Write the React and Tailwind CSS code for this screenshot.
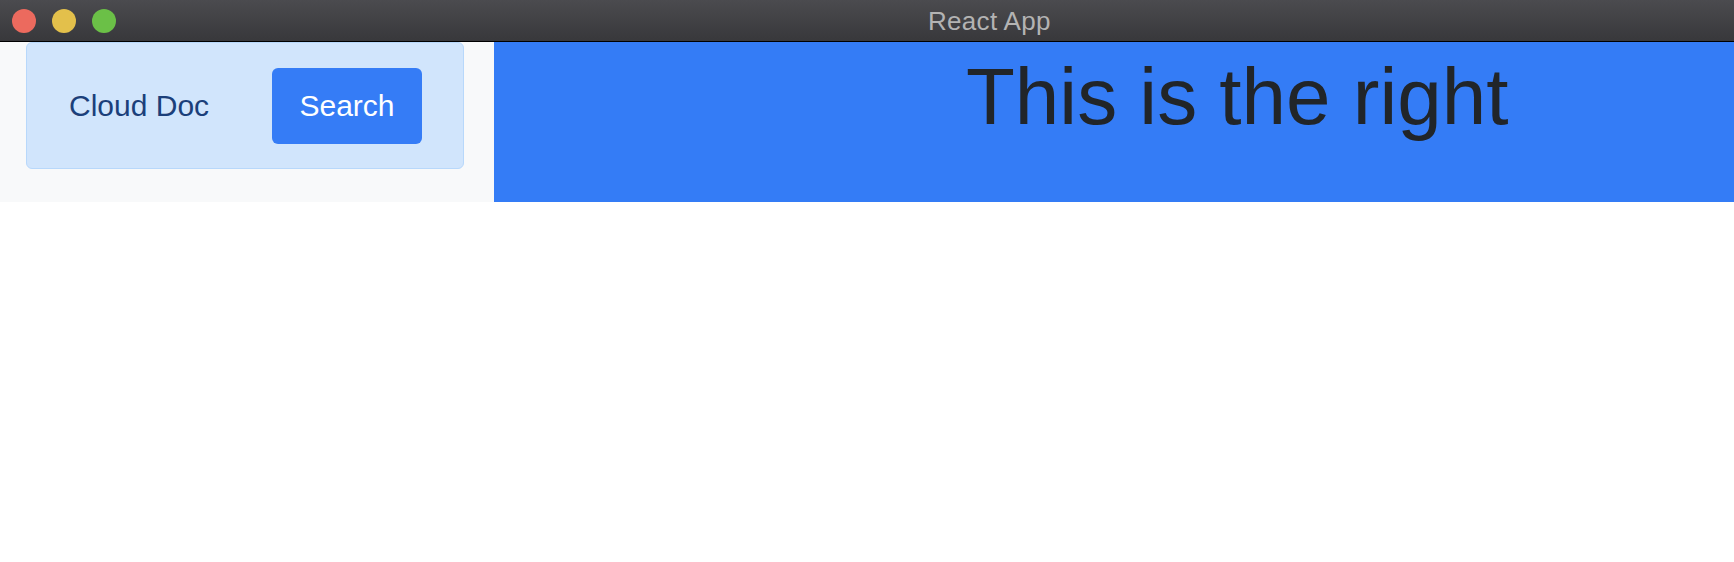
export default function App() {
  return (
    <div className="w-[1734px] h-[562px] bg-white overflow-hidden font-['Liberation_Sans',Arial,sans-serif]">
      {/* window title bar */}
      <div className="relative h-[42px] flex items-center bg-gradient-to-b from-[#4b4b4f] to-[#38383b] border-b border-black">
        <div className="flex items-center gap-4 pl-3">
          <span className="w-6 h-6 rounded-full bg-[#ec6a5e]" />
          <span className="w-6 h-6 rounded-full bg-[#e3c04b]" />
          <span className="w-6 h-6 rounded-full bg-[#6bc047]" />
        </div>
        <span className="ml-[812px] text-[26px] leading-none tracking-[0.3px] text-[#b3b3b3]">React App</span>
      </div>

      <div className="flex h-[160px]">
        {/* left column */}
        <div className="w-[494px] bg-[#f8f9fa] pl-[26px]">
          <div className="w-[438px] h-[127px] flex items-center justify-between pl-[42px] pr-[41px] bg-[#d1e5fc] border border-[#b8d8fb] rounded-md">
            <span className="text-[30px] text-[#1b3f7a]">Cloud Doc</span>
            <button className="w-[150px] h-[76px] flex items-center justify-center rounded-md bg-[#357cf6] text-white text-[30px]">
              Search
            </button>
          </div>
        </div>

        {/* right column */}
        <div className="flex-1 bg-[#347cf6] pl-[472px] pt-[15px]">
          <h1 className="text-[80px] leading-none text-[#212529] whitespace-nowrap">This is the right</h1>
        </div>
      </div>
    </div>
  );
}
